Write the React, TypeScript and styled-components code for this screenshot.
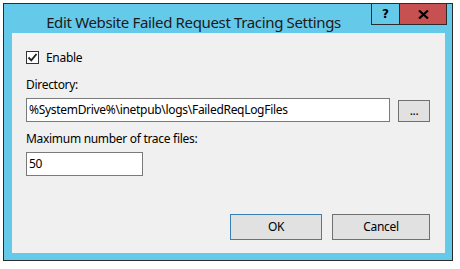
import styled, { createGlobalStyle } from 'styled-components';

const GlobalStyle = createGlobalStyle`
  html, body {
    margin: 0;
    padding: 0;
    background: #ffffff;
  }
  body {
    font-family: 'Segoe UI', 'Noto Sans', 'DejaVu Sans', sans-serif;
  }
`;

const App = () => {
  return (
    <>
      <GlobalStyle />
      <Page>
        <Window>
          <TitleBar>
            <Title>Edit Website Failed Request Tracing Settings</Title>
            <CaptionButtons>
              <HelpButton>?</HelpButton>
              <CloseButton>
                <svg width="11" height="9" viewBox="0 0 11 9">
                  <path d="M1 0.5 L10 8.5 M10 0.5 L1 8.5" stroke="#000" strokeWidth="2.2" />
                </svg>
              </CloseButton>
            </CaptionButtons>
          </TitleBar>

          <Body>
            <CheckRow>
              <CheckBox>
                <svg width="11" height="11" viewBox="0 0 11 11">
                  <path d="M1.5 5.5 L4.3 8.3 L9.5 2" stroke="#222" strokeWidth="1.9" fill="none" />
                </svg>
              </CheckBox>
              <Label>Enable</Label>
            </CheckRow>

            <Label $top={13}>Directory:</Label>
            <FieldRow>
              <TextBox $width={364}>%SystemDrive%\inetpub\logs\FailedReqLogFiles</TextBox>
              <BrowseButton>...</BrowseButton>
            </FieldRow>

            <Label $top={9}>Maximum number of trace files:</Label>
            <FieldRow>
              <TextBox $width={117}>50</TextBox>
            </FieldRow>

            <Footer>
              <DialogButton $width={92} $default>OK</DialogButton>
              <DialogButton $width={98}>Cancel</DialogButton>
            </Footer>
          </Body>
        </Window>
      </Page>
    </>
  );
};

export default App;

const Page = styled.div`
  width: 460px;
  height: 269px;
  padding: 3px 0 0 3px;
  box-sizing: border-box;
`;

const Window = styled.div`
  width: 450px;
  height: 258px;
  box-sizing: border-box;
  border: 1px solid #2b2b2b;
  background: #65c9ea;
  display: flex;
  flex-direction: column;
  padding: 0 7px 7px 8px;
`;

const TitleBar = styled.div`
  height: 29px;
  display: flex;
  align-items: flex-start;
  margin: 0 -7px 0 -8px;
`;

const Title = styled.div`
  flex: 1;
  text-align: center;
  padding-left: 12px;
  font-size: 15px;
  letter-spacing: -0.35px;
  line-height: 20px;
  padding-top: 8px;
  color: #1a1a1a;
  white-space: nowrap;
`;

const CaptionButtons = styled.div`
  display: flex;
  margin-top: -1px;
  margin-right: 5px;
`;

const HelpButton = styled.div`
  width: 27px;
  height: 20px;
  border: 1px solid #2b2b2b;
  border-right: none;
  display: flex;
  align-items: center;
  justify-content: center;
  font-family: 'DejaVu Sans', sans-serif;
  font-weight: bold;
  font-size: 12px;
  color: #000;
`;

const CloseButton = styled.div`
  width: 46px;
  height: 20px;
  border: 1px solid #2b2b2b;
  background: #c75050;
  display: flex;
  align-items: center;
  justify-content: center;
`;

const Body = styled.div`
  flex: 1;
  background: #f0f0f0;
  display: flex;
  flex-direction: column;
  align-items: flex-start;
  padding: 18px 14px 0 14px;
  letter-spacing: -0.3px;
`;

const CheckRow = styled.div`
  display: flex;
  align-items: center;
  gap: 7px;
  height: 13px;
`;

const CheckBox = styled.div`
  width: 11px;
  height: 11px;
  border: 1px solid #333;
  background: #fff;
  display: flex;
  align-items: center;
  justify-content: center;
`;

const Label = styled.div<{ $top?: number }>`
  font-size: 12px;
  line-height: 16px;
  color: #000;
  margin-top: ${(p) => p.$top ?? 0}px;
`;

const FieldRow = styled.div`
  display: flex;
  align-items: flex-start;
  gap: 8px;
  margin-top: 5px;
`;

const TextBox = styled.div<{ $width: number }>`
  width: ${(p) => p.$width}px;
  height: 24px;
  box-sizing: border-box;
  border: 1px solid #7a7a7a;
  background: #fff;
  font-size: 12px;
  line-height: 22px;
  padding-left: 2px;
  color: #000;
  white-space: nowrap;
  overflow: hidden;
`;

const BrowseButton = styled.div`
  width: 32px;
  height: 22px;
  margin-top: 2px;
  box-sizing: border-box;
  border: 1px solid #707070;
  background: #e1e1e1;
  font-size: 12px;
  line-height: 20px;
  text-align: center;
  color: #000;
`;

const Footer = styled.div`
  align-self: stretch;
  display: flex;
  justify-content: flex-end;
  gap: 10px;
  margin-top: 38px;
  padding-right: 1px;
`;

const DialogButton = styled.div<{ $width: number; $default?: boolean }>`
  width: ${(p) => p.$width}px;
  height: 26px;
  box-sizing: border-box;
  border: 1px solid ${(p) => (p.$default ? '#3c7fb1' : '#707070')};
  background: #e1e1e1;
  font-size: 12px;
  line-height: 24px;
  text-align: center;
  color: #000;
`;
